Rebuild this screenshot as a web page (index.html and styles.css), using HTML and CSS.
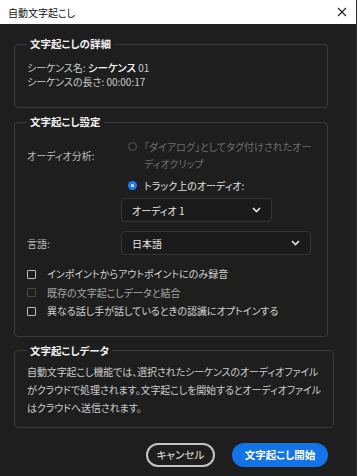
FILE: index.html
```html
<!DOCTYPE html>
<html lang="ja">
<head>
    <meta charset="UTF-8">
    <meta name="viewport" content="width=device-width, initial-scale=1.0">
    <title>自動文字起こし</title>
    <link rel="stylesheet" href="styles.css">
</head>
<body>
    <div class="window">
        <header class="titlebar">
            <span class="title">自動文字起こし</span>
            <svg class="close" width="10" height="10" viewBox="0 0 10 10">
                <path d="M1 1 L9 9 M9 1 L1 9" stroke="#222" stroke-width="1.1" fill="none"/>
            </svg>
        </header>

        <main class="content">
            <fieldset class="group details">
                <legend>文字起こしの詳細</legend>
                <p class="line">シーケンス名: <span class="strong">シーケンス</span> 01</p>
                <p class="line">シーケンスの長さ: 00:00:17</p>
            </fieldset>

            <fieldset class="group settings">
                <legend>文字起こし設定</legend>
                <div class="row analysis">
                    <span class="label">オーディオ分析:</span>
                    <div class="options">
                        <label class="radio disabled">
                            <span class="dot"></span>
                            <span class="radio-text">「ダイアログ」としてタグ付けされたオー<br>ディオクリップ</span>
                        </label>
                        <label class="radio checked">
                            <span class="dot"></span>
                            <span class="radio-text">トラック上のオーディオ:</span>
                        </label>
                        <div class="select narrow">
                            <span>オーディオ 1</span>
                            <svg class="chevron" width="9" height="6" viewBox="0 0 9 6"><path d="M1 1 L4.5 4.5 L8 1" stroke="#e6e6e6" stroke-width="1.6" fill="none"/></svg>
                        </div>
                    </div>
                </div>
                <div class="row language">
                    <span class="label">言語:</span>
                    <div class="select wide">
                        <span>日本語</span>
                        <svg class="chevron" width="9" height="6" viewBox="0 0 9 6"><path d="M1 1 L4.5 4.5 L8 1" stroke="#e6e6e6" stroke-width="1.6" fill="none"/></svg>
                    </div>
                </div>
                <ul class="checks">
                    <li class="check"><span class="box"></span>インポイントからアウトポイントにのみ録音</li>
                    <li class="check disabled"><span class="box"></span>既存の文字起こしデータと結合</li>
                    <li class="check"><span class="box"></span>異なる話し手が話しているときの認識にオプトインする</li>
                </ul>
            </fieldset>

            <fieldset class="group data">
                <legend>文字起こしデータ</legend>
                <p class="para">自動文字起こし機能では、選択されたシーケンスのオーディオファイル<br>がクラウドで処理されます。文字起こしを開始するとオーディオファイル<br>はクラウドへ送信されます。</p>
            </fieldset>

            <div class="actions">
                <button class="btn outline">キャンセル</button>
                <button class="btn primary">文字起こし開始</button>
            </div>
        </main>
    </div>
</body>
</html>
```

FILE: styles.css
```css
body {
    margin: 0;
    padding: 0;
    background: #1e1e1e;
    font-family: "Noto Sans CJK JP", "Noto Sans", sans-serif;
    font-size: 10px;
    font-feature-settings: "palt";
    color: #cdcdcd;
}
.window {
    width: 357px;
    height: 476px;
    box-sizing: border-box;
    border-right: 1px solid #2c2c2c;
    overflow: hidden;
}
.titlebar {
    height: 24px;
    background: #ffffff;
    color: #111;
    display: flex;
    align-items: center;
    justify-content: space-between;
    padding: 0 8px;
    font-size: 10px;
}
.close {
    margin-right: 1px;
}
.content {
    width: 314px;
    padding: 12px 0 0 14px;
}
.group {
    margin: 0;
    border: 1px solid #3a3a3a;
    border-radius: 4px;
    padding: 0 12px;
}
.group legend {
    padding: 0 3px;
    line-height: 16px;
    font-size: 10.5px;
    font-weight: bold;
    color: #f2f2f2;
}
.details {
    padding-top: 9px;
    padding-bottom: 18px;
}
.line {
    margin: 0;
    line-height: 14px;
}
.strong {
    color: #fafafa;
    font-weight: 500;
    font-size: 10.5px;
}
.settings {
    margin-top: 6px;
    padding-top: 8px;
    padding-bottom: 15px;
}
.row {
    display: grid;
    grid-template-columns: 94px 1fr;
}
.analysis .label {
    margin-top: 9px;
    line-height: 17px;
}
.language {
    margin-top: 9px;
    align-items: center;
}
.label {
    color: #bdbdbd;
}
.options {
    display: flex;
    flex-direction: column;
}
.radio {
    display: flex;
    align-items: flex-start;
    gap: 7px;
    margin-left: 7px;
    line-height: 17px;
}
.radio-text {
    white-space: nowrap;
}
.radio + .radio {
    margin-top: 5px;
}
.radio .dot {
    width: 9px;
    height: 9px;
    box-sizing: border-box;
    border-radius: 50%;
    margin-top: 4px;
    flex-shrink: 0;
}
.radio.disabled {
    color: #6f6f6f;
}
.radio.disabled .dot {
    border: 1.5px solid #5a5a5a;
}
.radio.checked {
    color: #e0e0e0;
}
.radio.checked .dot {
    background: #1f7bf0;
    position: relative;
}
.radio.checked .dot::after {
    content: "";
    position: absolute;
    left: 3px;
    top: 3px;
    width: 3px;
    height: 3px;
    border-radius: 50%;
    background: #e8f0ff;
}
.select {
    height: 24px;
    box-sizing: border-box;
    border: 1px solid #343434;
    border-radius: 4px;
    background: #1a1a1a;
    display: flex;
    align-items: center;
    justify-content: space-between;
    padding: 0 10px 0 10px;
    color: #e6e6e6;
}
.select.narrow {
    width: 151px;
    margin-top: 4px;
}
.select.wide {
    width: 190px;
}
.checks {
    list-style: none;
    margin: 10px 0 0 0;
    padding: 0;
}
.check {
    display: flex;
    align-items: center;
    gap: 11px;
    line-height: 18.5px;
    color: #d2d2d2;
}
.check .box {
    width: 9px;
    height: 9px;
    box-sizing: border-box;
    border: 1.5px solid #bdbdbd;
    border-radius: 1px;
}
.check.disabled {
    color: #a8a8a8;
}
.check.disabled .box {
    border-color: #4a4a4a;
}
.data {
    margin-top: 6px;
    padding-top: 4px;
    padding-bottom: 10px;
}
.para {
    margin: 0;
    line-height: 18px;
    white-space: nowrap;
    letter-spacing: -0.1px;
}
.actions {
    display: flex;
    justify-content: flex-end;
    gap: 17px;
    margin-top: 15px;
}
.btn {
    height: 24px;
    border-radius: 12px;
    font-family: inherit;
    font-size: 10.5px;
    font-feature-settings: "palt";
    cursor: pointer;
    padding: 0;
}
.btn.outline {
    width: 69px;
    background: transparent;
    border: 2px solid #c4c4c4;
    color: #e4e4e4;
}
.btn.primary {
    width: 96px;
    background: #1473e6;
    border: none;
    color: #ffffff;
    font-weight: bold;
}
```
